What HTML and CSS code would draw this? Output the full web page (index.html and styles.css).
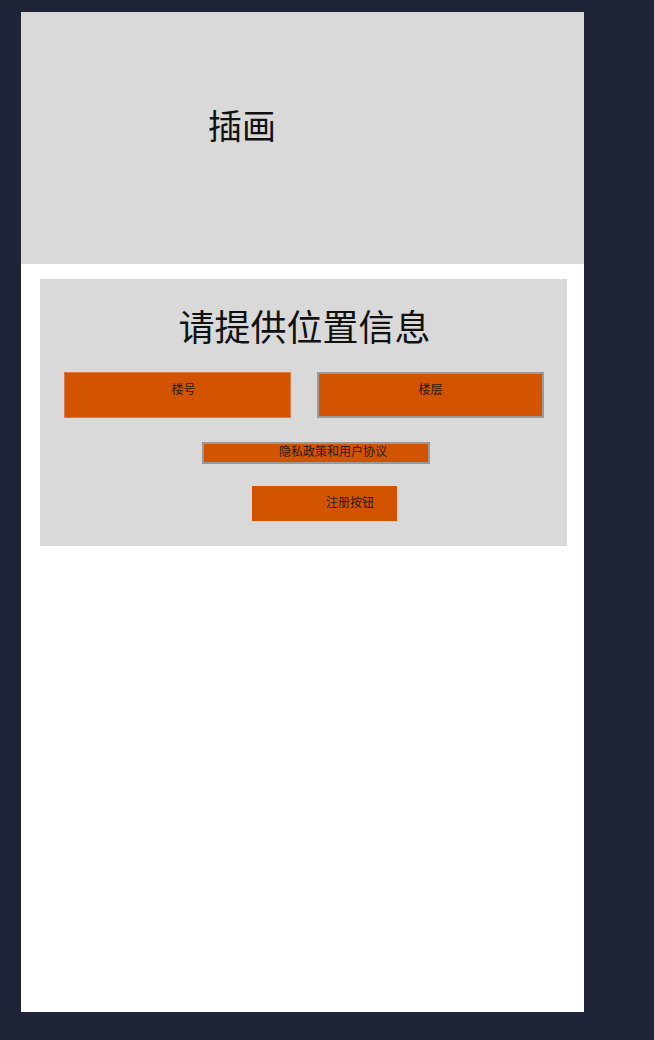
FILE: index.html
```html
<!DOCTYPE html>
<html lang="zh">
<head>
<meta charset="utf-8">
<title>位置信息</title>
<link rel="stylesheet" href="styles.css">
</head>
<body>
<div class="frame">
  <div class="illustration"><span class="illus-text">插画</span></div>
  <div class="panel">
    <h1 class="title">请提供位置信息</h1>
    <div class="row">
      <div class="field field-a">楼号</div>
      <div class="field field-b">楼层</div>
    </div>
    <div class="privacy">隐私政策和用户协议</div>
    <div class="register">注册按钮</div>
  </div>
</div>
</body>
</html>
```
FILE: styles.css
```css
html, body {
  margin: 0;
  padding: 0;
  background: #1f2536;
}
body {
  font-family: "Noto Sans CJK SC", "Noto Sans", sans-serif;
  padding: 12px 0 0 21px;
  height: 1040px;
  box-sizing: border-box;
}
.frame {
  width: 563px;
  height: 1000px;
  background: #ffffff;
  display: flex;
  flex-direction: column;
}
.illustration {
  height: 252px;
  background: #d9d9d9;
  padding: 96px 0 0 187px;
  box-sizing: border-box;
}
.illus-text {
  font-size: 34px;
  line-height: 34px;
  color: #111;
}
.panel {
  margin: 15px 17px 0 19px;
  height: 267px;
  background: #d9d9d9;
  padding-top: 27px;
  box-sizing: border-box;
  display: flex;
  flex-direction: column;
}
.title {
  margin: 0;
  font-weight: 400;
  font-size: 36px;
  line-height: 38px;
  text-align: center;
  color: #111;
  padding-left: 2px;
}
.row {
  display: flex;
  gap: 26px;
  margin: 28px 0 0 24px;
}
.field {
  width: 227px;
  height: 46px;
  box-sizing: border-box;
  background: #d35400;
  color: #2a1a10;
  font-size: 12px;
  line-height: 14px;
  text-align: center;
  padding-top: 9px;
}
.field-a {
  border: 1px solid #e07a4a;
  padding-left: 12px;
}
.field-b {
  border: 2px solid #999;
  padding-top: 8px;
}
.privacy {
  margin: 24px 0 0 162px;
  width: 228px;
  height: 22px;
  box-sizing: border-box;
  background: #d35400;
  border: 2px solid #999;
  color: #2a1a10;
  font-size: 12px;
  line-height: 14px;
  padding-left: 75px;
  white-space: nowrap;
}
.register {
  margin: 22px 0 0 212px;
  width: 145px;
  height: 35px;
  box-sizing: border-box;
  background: #d35400;
  color: #2a1a10;
  font-size: 12px;
  line-height: 14px;
  padding: 9px 0 0 74px;
  white-space: nowrap;
}
```
